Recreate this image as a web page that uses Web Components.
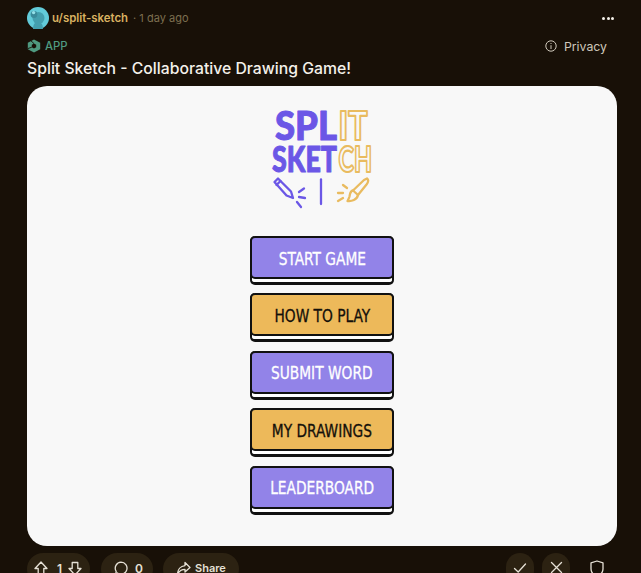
<!DOCTYPE html>
<html>
<head>
<meta charset="utf-8">
<title>Split Sketch</title>
<style>
  html, body { margin: 0; height: 100%; background: #181007; overflow: hidden; }
  body { font-family: Inter, "Liberation Sans", sans-serif; }
</style>
</head>
<body>
<post-view>
  <game-menu>
    <menu-button>START GAME</menu-button>
    <menu-button tone="yellow">HOW TO PLAY</menu-button>
    <menu-button>SUBMIT WORD</menu-button>
    <menu-button tone="yellow">MY DRAWINGS</menu-button>
    <menu-button>LEADERBOARD</menu-button>
  </game-menu>
</post-view>

<script>
class PostView extends HTMLElement {
  constructor() {
    super();
    this.attachShadow({ mode: "open" });
  }
  connectedCallback() {
    this.shadowRoot.innerHTML = `
    <style>
      :host {
        display: block;
        height: 573px;
        overflow: hidden;
        box-sizing: border-box;
        padding: 6px 24px 0 27px;
        color: #f2efe9;
        font-family: Inter, "Liberation Sans", sans-serif;
      }
      #byline {
        display: flex;
        align-items: center;
        height: 24px;
        margin-bottom: 6px;
        font-size: 11.4px;
      }
      #avatar { width: 22px; height: 22px; margin-right: 3px; flex: none; }
      #user { color: #d9b262; font-weight: 600; }
      #time { color: #7d6f50; margin-left: 5px; font-size: 11px; }
      #more { margin-left: auto; margin-right: 3px; display: flex; gap: 1.5px; }
      #more i { width: 3px; height: 3px; border-radius: 50%; background: #f4f1ea; }
      #tagrow { display: flex; align-items: center; height: 20px; padding-right: 10px; }
      #app { display: flex; align-items: center; gap: 4px; color: #4f9a80; font-size: 11.3px; font-weight: 500; }
      #privacy { margin-left: auto; display: flex; align-items: center; gap: 7px; color: #cfc8bb; font-size: 12.3px; }
      h1 {
        margin: 2px 0 6px;
        font-size: 15.75px;
        line-height: 22px;
        font-weight: 500;
        color: #f4f1ea;
      }
      #actions { display: flex; align-items: flex-start; margin-top: 7px; }
      .pill {
        display: flex;
        align-items: center;
        box-sizing: border-box;
        height: 32px;
        padding-bottom: 2px;
        border-radius: 16px;
        background: #2c2212;
        font-size: 11px;
        font-weight: 600;
        color: #e6e1d6;
        flex: none;
      }
      svg.line { fill: none; stroke: #e6e1d6; stroke-width: 1.3; stroke-linejoin: round; stroke-linecap: round; }
      #vote { width: 63px; padding-left: 7px; margin-right: 11px; }
      #vote span { margin: 0 6px 0 9px; font-size: 12px; }
      #comments { width: 52px; padding-left: 13px; margin-right: 10px; gap: 7px; }
      #comments span { font-size: 12px; }
      #share { width: 76px; padding-left: 13px; gap: 4px; }
      .round { width: 28px; height: 32px; border-radius: 14px; justify-content: center; padding-bottom: 3px; }
      #ok { margin-left: auto; margin-right: 8px; }
      #shield { margin: 7px 13px 0 20px; flex: none; }
    </style>
    <div id="byline">
      <svg id="avatar" viewBox="0 0 22 22">
        <circle cx="11" cy="11" r="11" fill="#62cbd9"/>
        <circle cx="11.500" cy="11" r="6" fill="#449fae"/>
        <circle cx="7" cy="7.500" r="3.400" fill="#3a8a9a"/>
        <circle cx="6.600" cy="5.600" r="1.700" fill="#94e0e8"/>
        <path d="M6 22 Q6 15 11 15 Q16 15 16 22Z" fill="#449fae"/>
      </svg>
      <span id="user">u/split-sketch</span>
      <span id="time">· 1 day ago</span>
      <div id="more"><i></i><i></i><i></i></div>
    </div>
    <div id="tagrow">
      <div id="app">
        <svg width="14" height="14" viewBox="0 0 14 14">
          <path d="M7 .4 13.200 3.700V10.300L7 13.600 .8 10.300V3.700Z" fill="#4f9a80"/>
          <path d="M7 4.600 9.200 5.800V8.200L7 9.400 4.800 8.200V5.800Z" fill="#181007"/>
          <path d="M4 1.900 7 4.600M.8 9.600 4.800 8.200" stroke="#181007" stroke-width=".9"/>
        </svg>
        APP
      </div>
      <div id="privacy">
        <svg width="12" height="12" viewBox="0 0 12 12" fill="none" stroke="#cfc8bb" stroke-width="1">
          <circle cx="6" cy="6" r="5.200"/><path d="M6 5.200V9M6 3V4"/>
        </svg>
        Privacy
      </div>
    </div>
    <h1>Split Sketch - Collaborative Drawing Game!</h1>
    <slot></slot>
    <div id="actions">
      <div class="pill" id="vote">
        <svg class="line" width="14" height="15" viewBox="0 0 14 15"><path d="M7 1 1 7.500H4.200V13.500H9.800V7.500H13Z"/></svg>
        <span>1</span>
        <svg class="line" width="14" height="15" viewBox="0 0 14 15"><path d="M7 14 1 7.500H4.200V1.500H9.800V7.500H13Z"/></svg>
      </div>
      <div class="pill" id="comments">
        <svg class="line" width="14" height="15" viewBox="0 0 14 15"><path d="M7 1.200A6 6 0 1 1 3.400 12L1.600 13.600 2.200 10.400A6 6 0 0 1 7 1.200Z"/></svg>
        <span>0</span>
      </div>
      <div class="pill" id="share">
        <svg class="line" width="15" height="15" viewBox="0 0 15 15"><path d="M9 1.500 14 6.500 9 11V8.400C5.500 8.400 3 10 1.500 13.500 1.500 8.500 4.500 5 9 4.600Z"/></svg>
        <span>Share</span>
      </div>
      <div class="pill round" id="ok">
        <svg class="line" width="14" height="12" viewBox="0 0 14 12"><path d="M1.500 6.500 5.200 10 12.500 2"/></svg>
      </div>
      <div class="pill round" id="no">
        <svg class="line" width="13" height="13" viewBox="0 0 13 13"><path d="M1.500 1.500 11.500 11.500M11.500 1.500 1.500 11.500"/></svg>
      </div>
      <svg id="shield" class="line" width="14" height="17" viewBox="0 0 14 17"><path d="M7 1 13 2.800V9C13 12.500 10 15 7 16 4 15 1 12.500 1 9V2.800Z"/></svg>
    </div>
    `;
  }
}

class GameMenu extends HTMLElement {
  constructor() {
    super();
    this.attachShadow({ mode: "open" });
  }
  connectedCallback() {
    this.shadowRoot.innerHTML = `
    <style>
      :host {
        display: flex;
        flex-direction: column;
        align-items: center;
        box-sizing: border-box;
        width: 590px;
        height: 460px;
        padding-top: 21px;
        background: #f8f8f8;
        border-radius: 20px;
      }
      #logo { width: 110px; height: 129px; flex: none; display: block; }
      #logo text { font-family: Lato, "Liberation Sans", sans-serif; font-weight: 900; }
      #logo .top { font-size: 40px; }
      #logo .bottom { font-size: 36px; }
      #logo .solid { fill: #6b57e6; stroke: #6b57e6; stroke-width: 1px; stroke-linejoin: round; }
      #logo .hollow { fill: none; stroke: #e9bb5f; stroke-width: 2.2px; stroke-linejoin: round; }
      #buttons { display: flex; flex-direction: column; }
    </style>
    <svg id="logo" viewBox="0 0 110 129">
      <text class="solid top" x="8" y="33" textLength="62" lengthAdjust="spacingAndGlyphs">SPL</text>
      <text class="hollow top" x="71.500" y="33" textLength="29" lengthAdjust="spacingAndGlyphs">IT</text>
      <text class="solid bottom" x="5" y="65" textLength="65" lengthAdjust="spacingAndGlyphs">SKET</text>
      <text class="hollow bottom" x="71.500" y="65" textLength="33.500" lengthAdjust="spacingAndGlyphs">CH</text>
      <g fill="none" stroke="#6b57e6" stroke-width="2.300" stroke-linecap="round" stroke-linejoin="round">
        <path d="M7.500 75 11 71.500 24 84.500 26 91 19.500 88.500Z"/>
        <path d="M9.500 78 13.500 74"/>
        <path d="M32 85 37 81.500M32 90 38 91M30 95 34 100"/>
        <path d="M54 72.500V97"/>
      </g>
      <g fill="none" stroke="#e9bb5f" stroke-width="2.300" stroke-linecap="round" stroke-linejoin="round">
        <path d="M100 71.500C102 73 101 75.500 99.500 77.500L91 88 86 83.500 97 73Z"/>
        <path d="M86 83.500C83 84 83 87 82.500 89.500 82 91.500 81 93 80.500 94 84.500 94.500 90 93 91 88"/>
        <path d="M76 78 80 81M71 86 76 86M71 94 76 91"/>
      </g>
    </svg>
    <div id="buttons"><slot></slot></div>
    `;
  }
}

class MenuButton extends HTMLElement {
  constructor() {
    super();
    this.attachShadow({ mode: "open" });
  }
  connectedCallback() {
    const yellow = this.getAttribute("tone") === "yellow";
    this.shadowRoot.innerHTML = `
    <style>
      :host {
        display: block;
        box-sizing: border-box;
        width: 144px;
        height: 49px;
        margin-bottom: 8.4px;
        border-bottom: 3px solid #111;
        border-left: 2px solid #111;
        border-right: 2px solid #111;
        border-radius: 5px;
        background: #fff;
      }
      :host(:last-child) { margin-bottom: 0; }
      #face {
        box-sizing: border-box;
        height: 43px;
        margin: 0 -2px;
        padding-top: 1px;
        display: flex;
        align-items: center;
        justify-content: center;
        border: 2px solid #111;
        border-radius: 5px;
        background: ${yellow ? "#edb95a" : "#9283e8"};
        color: ${yellow ? "#14100a" : "#ffffff"};
        font-family: "DejaVu Sans Condensed", "DejaVu Sans", sans-serif;
        font-stretch: condensed;
        font-size: 18px;
        -webkit-text-stroke: .3px currentColor;
      }
      #label { display: inline-block; white-space: nowrap; transform: scaleX(.85); }
    </style>
    <div id="face"><span id="label"><slot></slot></span></div>
    `;
  }
}

customElements.define("post-view", PostView);
customElements.define("game-menu", GameMenu);
customElements.define("menu-button", MenuButton);
</script>
</body>
</html>
